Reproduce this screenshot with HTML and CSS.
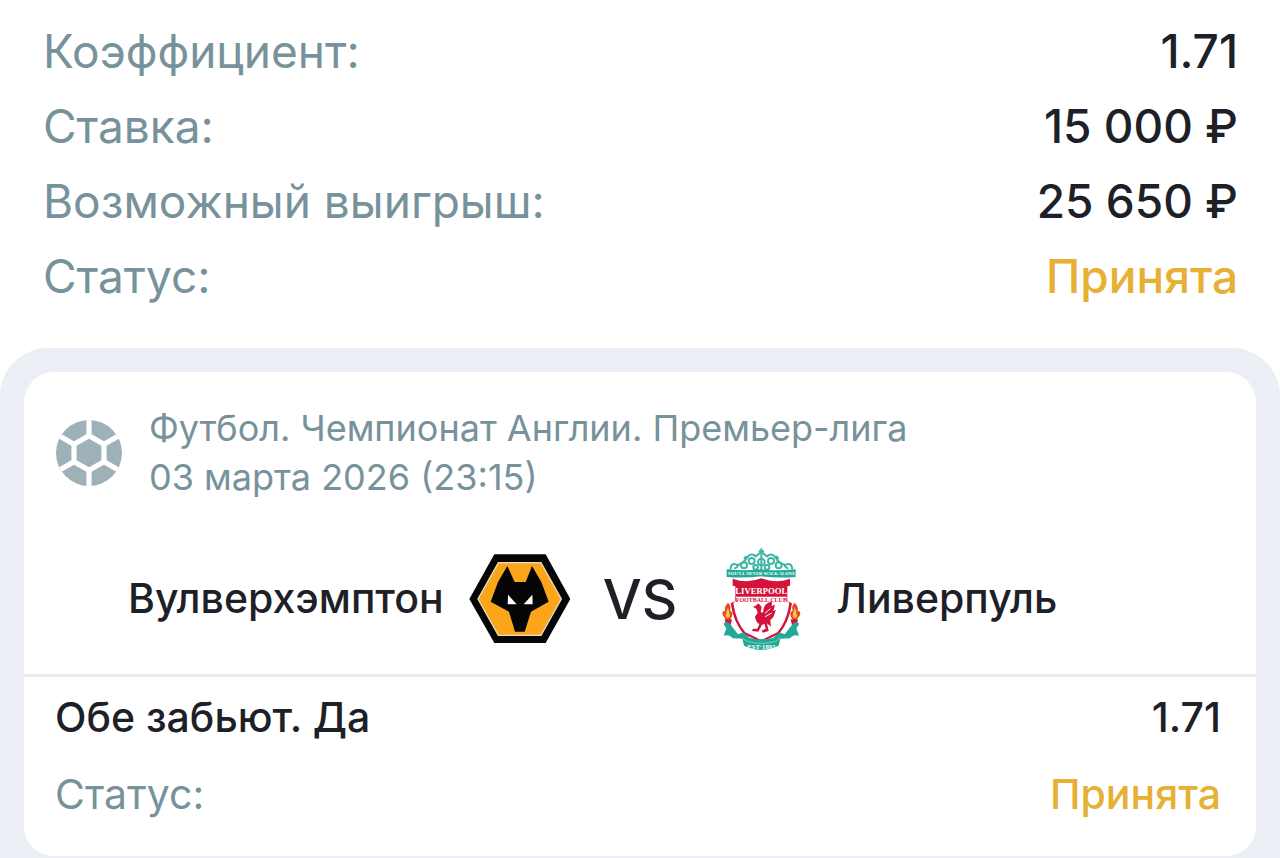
FILE: index.html
```html
<!DOCTYPE html>
<html lang="ru">
<head>
    <meta charset="UTF-8">
    <meta name="viewport" content="width=device-width, initial-scale=1.0">
    <title>Ставка</title>
    <link rel="stylesheet" href="styles.css">
</head>
<body>

    <dl class="summary">
        <div class="row">
            <dt>Коэффициент:</dt>
            <dd>1.71</dd>
        </div>
        <div class="row">
            <dt>Ставка:</dt>
            <dd>15 000 ₽</dd>
        </div>
        <div class="row">
            <dt>Возможный выигрыш:</dt>
            <dd>25 650 ₽</dd>
        </div>
        <div class="row">
            <dt>Статус:</dt>
            <dd class="accepted">Принята</dd>
        </div>
    </dl>

    <main class="events">
        <article class="card">
            <header class="league">
                <svg class="ball" viewBox="0 0 66 66" aria-hidden="true">
                    <defs>
                        <clipPath id="ball-clip"><circle cx="33" cy="33" r="33"/></clipPath>
                    </defs>
                    <g clip-path="url(#ball-clip)">
                        <rect width="66" height="66" fill="#9fb1b8"/>
                        <path d="M33 15.7 48 24.3V41.7L33 50.3 18 41.7V24.3Z M33 15.7V-2M48 24.3 68 12.8M48 41.7 68 53.2M33 50.3V68M18 41.7-2 53.2M18 24.3-2 12.8" fill="none" stroke="#fff" stroke-width="5.2" stroke-linejoin="round"/>
                    </g>
                </svg>
                <div class="league-text">
                    <p>Футбол. Чемпионат Англии. Премьер-лига</p>
                    <p>03 марта 2026 (23:15)</p>
                </div>
            </header>

            <div class="match">
                <div class="team home">
                    <span>Вулверхэмптон</span>
                    <svg class="crest" viewBox="30 24 306 306" aria-hidden="true">
                        <path d="M106 43H260L334 177 260 309H106L31 177Z" fill="#050505"/>
                        <path d="M118 68H246L307 177 246 286H118L57 177Z" fill="#fba61a" stroke="#e9dcc0" stroke-width="4"/>
                        <path d="M145 78 167 126H200L219 78 247 126 269 185 216 215 197 275H168L150 215 95 185 117 126Z" fill="#050505"/>
                        <path d="M147 164 173 193H146ZM220 164 194 193H221Z" fill="#fff"/>
                    </svg>
                </div>
                <strong class="versus">VS</strong>
                <div class="team away">
                    <svg class="crest" viewBox="-4 24 306 306" aria-hidden="true">
                        <!-- gates and banner -->
                        <g fill="none" stroke="#3cb5a3" stroke-width="6">
                            <path d="M60 88Q62 68 76 73T72 86M246 88Q244 68 230 73T234 86"/>
                            <path d="M78 76Q101 72 111 51Q124 37 136 49L153 36 170 49Q182 37 195 51Q205 72 228 76"/>
                            <circle cx="101" cy="76" r="9"/>
                            <circle cx="124" cy="63" r="9"/>
                            <circle cx="136" cy="82" r="7"/>
                            <circle cx="153" cy="66" r="10"/>
                            <circle cx="170" cy="82" r="7"/>
                            <circle cx="182" cy="63" r="9"/>
                            <circle cx="205" cy="76" r="9"/>
                            <path d="M153 25V92M145 34H161M108 48 101 57M198 48 205 57"/>
                        </g>
                        <path d="M49 88Q101 94 153 88Q205 94 256 88V111Q205 115 153 109Q101 115 49 111Z" fill="#22aa96"/>
                        <text x="153" y="106" text-anchor="middle" class="motto">YOU'LL NEVER WALK ALONE</text>
                        <!-- shield -->
                        <path d="M67 116Q110 132 153 115Q196 132 239 116V137L231 139V184L245 190Q237 246 207 281Q184 293 153 306Q122 293 99 281Q69 246 61 190L75 184V139L67 137Z" fill="#d4133d"/>
                        <path d="M77 170H229V182L237 190Q229 246 201 277L153 300 105 277Q77 246 69 190L77 182Z" fill="#fff"/>
                        <text x="153" y="163" text-anchor="middle" class="club-name">LIVERPOOL</text>
                        <text x="153" y="186" text-anchor="middle" class="club-sub">FOOTBALL CLUB</text>
                        <!-- liver bird -->
                        <path d="M144 190 135 198 127 200 138 206 142 218 134 230Q136 246 147 252L141 266 128 266 125 273 144 275 155 254 163 252 166 266 154 272 158 278 175 273 170 250 182 260 180 241 189 231 197 210 189 213 194 194 184 198 185 184Q158 190 158 218L151 216 154 201Z" fill="#d4133d"/>
                        <path d="M164 220 180 206M164 230 184 219" stroke="#fff" stroke-width="3"/>
                        <!-- flames -->
                        <g id="torch">
                            <path d="M53 188Q40 201 44 214Q36 211 36 222Q42 238 54 241Q68 233 66 218L59 211Q64 198 53 188Z" fill="#e34b27"/>
                            <path d="M53 203Q46 213 48 222Q43 224 47 232Q54 238 59 229Q58 215 53 203Z" fill="#f8c440"/>
                            <path d="M43 238H65L57 272H50Z" fill="#d4133d"/>
                        </g>
                        <use href="#torch" transform="matrix(-1 0 0 1 306 0)"/>
                        <!-- ribbon -->
                        <path d="M39 251Q53 241 62 256L83 283 99 277 118 294Q153 302 188 294L207 277 223 283 244 256Q253 241 267 251L258 265 266 287Q249 282 239 295L210 296 205 317Q153 342 101 317L96 296 67 295Q57 282 40 287L48 265Z" fill="#22aa96"/>
                        <path d="M96 294 111 304Q153 316 195 304L210 294" fill="none" stroke="#a8ddd4" stroke-width="2"/>
                        <text x="153" y="326" text-anchor="middle" class="founded">EST·1892</text>
                    </svg>
                    <span>Ливерпуль</span>
                </div>
            </div>

            <dl class="bet">
                <div class="row">
                    <dt class="outcome">Обе забьют. Да</dt>
                    <dd>1.71</dd>
                </div>
                <div class="row">
                    <dt>Статус:</dt>
                    <dd class="accepted">Принята</dd>
                </div>
            </dl>
        </article>
    </main>

</body>
</html>
```

FILE: styles.css
```css
* {
    margin: 0;
    padding: 0;
    box-sizing: border-box;
}

body {
    background: #fff;
    color: #1d2127;
    font-family: Inter, sans-serif;
}

.row {
    display: flex;
    justify-content: space-between;
    align-items: center;
    white-space: nowrap;
}

dt {
    color: #78929b;
}

dd {
    font-weight: 500;
}

dd.accepted {
    color: #e6b034;
}

.summary {
    padding: 14px 42px 34px 43px;
    font-size: 46px;
    line-height: 75px;
}

.events {
    padding: 24px 24px 2px;
    background: #ebeef4;
    border-radius: 48px 48px 0 0;
}

.card {
    background: #fff;
    border-radius: 30px;
}

.league {
    display: flex;
    align-items: center;
    gap: 27px;
    padding: 32px 32px 0;
    color: #78929b;
    font-size: 36px;
    line-height: 49px;
}

.ball {
    flex: none;
    width: 66px;
    height: 66px;
}

.match {
    display: grid;
    grid-template-columns: 1fr auto 1fr;
    align-items: center;
    gap: 32px;
    padding: 46px 32px 24px;
    border-bottom: 3px solid #ebebed;
}

.team {
    display: flex;
    align-items: center;
    gap: 25px;
    font-size: 41px;
    font-weight: 500;
    line-height: 48px;
}

.team span {
    padding-bottom: 3px;
}

.home {
    justify-content: flex-end;
}

.crest {
    flex: none;
    width: 102px;
    height: 102px;
}

.motto,
.club-name,
.club-sub,
.founded {
    fill: #fff;
    font-family: "Liberation Serif", serif;
    font-weight: 700;
}

.motto {
    font-size: 14px;
}

.club-name {
    font-size: 26px;
}

.club-sub {
    fill: #d4133d;
    font-size: 18px;
}

.founded {
    font-size: 20px;
}

.versus {
    font-size: 55px;
    font-weight: 500;
}

.bet {
    padding: 2px 35px 23px 31px;
    font-size: 41px;
    line-height: 77px;
}

.bet .outcome {
    color: #1d2127;
    font-weight: 500;
}
```
